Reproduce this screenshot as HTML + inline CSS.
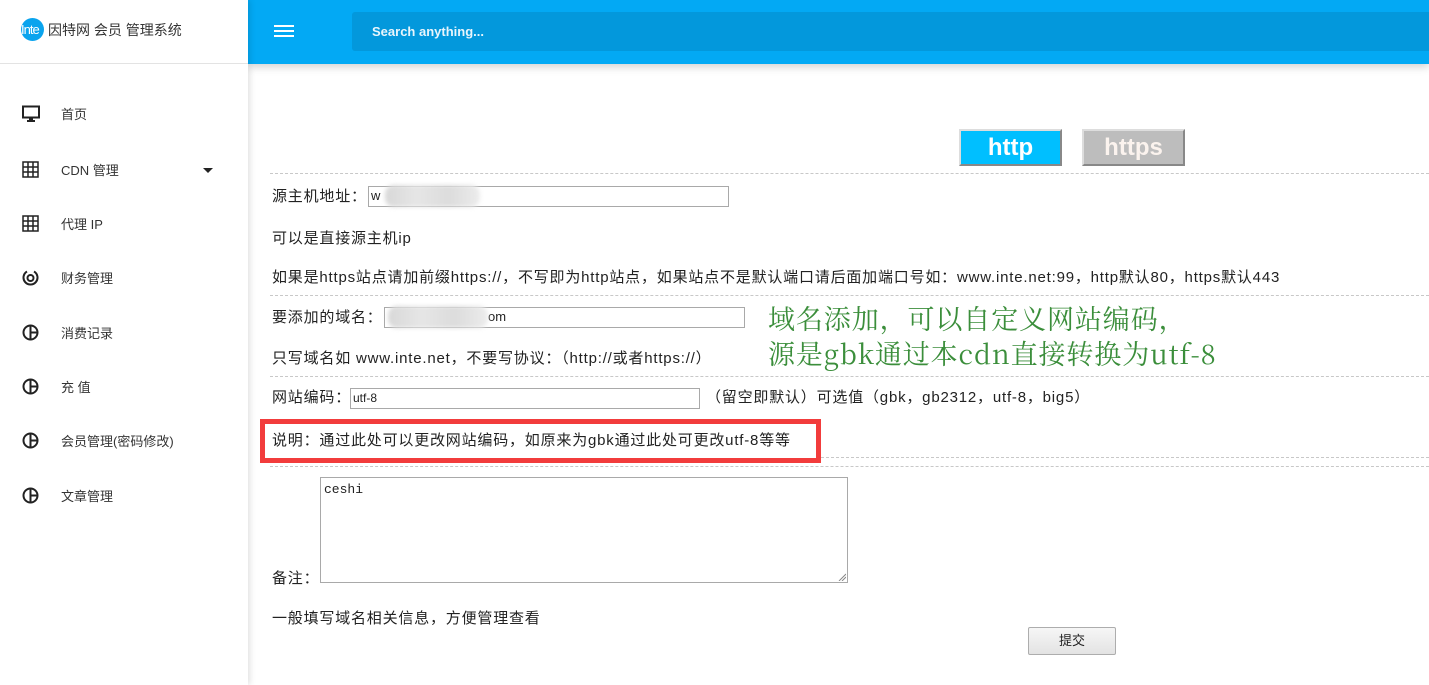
<!DOCTYPE html>
<html><head><meta charset="utf-8"><style>
*{margin:0;padding:0;box-sizing:border-box}
body{width:1429px;height:685px;overflow:hidden;background:#fff;position:relative;font-family:"Liberation Sans","Noto Sans CJK SC",sans-serif;color:#222}
.a{position:absolute;white-space:nowrap}
.side{position:absolute;left:0;top:0;width:248px;height:685px;background:#fff;box-shadow:2px 0 6px rgba(0,0,0,.12);z-index:3}
.logo{position:absolute;left:0;top:0;width:248px;height:64px;border-bottom:1px solid #e3e3e3}
.nav{position:absolute;left:61px;font-size:13px;color:#333}
.ic{position:absolute;left:22px}
.top{position:absolute;left:248px;top:0;width:1181px;height:64px;background:#03a9f4;box-shadow:0 3px 8px rgba(0,0,0,.18);z-index:2}
.dash{position:absolute;left:270px;right:0;border-top:1px dashed #c8c8c8}
.t{position:absolute;font-size:15px;color:#222;white-space:nowrap;letter-spacing:0.8px}
.inp{position:absolute;border:1px solid #a9a9a9;background:#fff;font-size:13px;padding-left:2px;line-height:18px}
.blur{position:absolute;background:linear-gradient(90deg,#d8d8d8,#e6e6e6,#dcdcdc,#ececec);border-radius:9px;filter:blur(2px)}
</style></head><body>
<div class="side">
 <div class="logo">
  <div class="a" style="left:21px;top:18px;width:23px;height:23px;border-radius:50%;background:#0aa4ee;color:#fff;font-size:13px;line-height:23px;letter-spacing:-1px;overflow:hidden">Inte</div>
  <div class="a" style="left:48px;top:20px;font-size:14px;color:#333">因特网 会员 管理系统</div>
 </div>
 <svg class="ic" style="top:105px" width="18" height="18" viewBox="0 0 18 18"><rect x="1" y="1.5" width="16" height="11" fill="none" stroke="#222" stroke-width="2"/><rect x="7" y="13" width="4" height="2" fill="#222"/><rect x="5" y="15" width="8" height="2" fill="#222"/></svg>
 <div class="nav" style="top:104px">首页</div>
 <svg class="ic" style="top:161px" width="17" height="17" viewBox="0 0 17 17" fill="none" stroke="#222" stroke-width="1.5"><rect x="1" y="1" width="15" height="15"/><path d="M6 1V16M11 1V16M1 6H16M1 11H16"/></svg>
 <div class="nav" style="top:160px">CDN 管理</div>
 <div class="a" style="left:203px;top:168px;width:0;height:0;border-left:5px solid transparent;border-right:5px solid transparent;border-top:5px solid #222"></div>
 <svg class="ic" style="top:215px" width="17" height="17" viewBox="0 0 17 17" fill="none" stroke="#222" stroke-width="1.5"><rect x="1" y="1" width="15" height="15"/><path d="M6 1V16M11 1V16M1 6H16M1 11H16"/></svg>
 <div class="nav" style="top:214px">代理 IP</div>
 <svg class="ic" style="top:269px" width="17" height="17" viewBox="0 0 17 17" fill="none" stroke="#222" stroke-width="2"><path d="M5 2.5A7 7 0 1 0 12 2.5"/><circle cx="8.5" cy="9" r="3"/></svg>
 <div class="nav" style="top:268px">财务管理</div>
 <svg class="ic" style="top:324px" width="17" height="17" viewBox="0 0 17 17" fill="none" stroke="#222" stroke-width="2"><circle cx="8.5" cy="8.5" r="7"/><path d="M8.5 1.5V15.5M8.5 8.5H15.5"/></svg>
 <div class="nav" style="top:323px">消费记录</div>
 <svg class="ic" style="top:378px" width="17" height="17" viewBox="0 0 17 17" fill="none" stroke="#222" stroke-width="2"><circle cx="8.5" cy="8.5" r="7"/><path d="M8.5 1.5V15.5M8.5 8.5H15.5"/></svg>
 <div class="nav" style="top:377px">充 值</div>
 <svg class="ic" style="top:432px" width="17" height="17" viewBox="0 0 17 17" fill="none" stroke="#222" stroke-width="2"><circle cx="8.5" cy="8.5" r="7"/><path d="M8.5 1.5V15.5M8.5 8.5H15.5"/></svg>
 <div class="nav" style="top:431px">会员管理(密码修改)</div>
 <svg class="ic" style="top:487px" width="17" height="17" viewBox="0 0 17 17" fill="none" stroke="#222" stroke-width="2"><circle cx="8.5" cy="8.5" r="7"/><path d="M8.5 1.5V15.5M8.5 8.5H15.5"/></svg>
 <div class="nav" style="top:486px">文章管理</div>
</div>
<div class="top">
 <div class="a" style="left:26px;top:25px;width:20px;height:2px;background:#fff;box-shadow:0 5px 0 #fff,0 10px 0 #fff"></div>
 <div class="a" style="left:104px;top:12px;right:0;height:39px;background:#0398dc;border-radius:3px 0 0 3px"></div>
 <div class="a" style="left:124px;top:24px;font-size:13px;font-weight:bold;color:#e8f5fc">Search anything...</div>
</div>

<div class="a" style="left:959px;top:129px;width:103px;height:37px;background:#00bfff;border:2px solid;border-color:#ddd #888 #888 #ddd;color:#fff;font-weight:bold;font-size:24px;text-align:center;line-height:34px">http</div>
<div class="a" style="left:1082px;top:129px;width:103px;height:37px;background:#bdbdbd;border:2px solid;border-color:#ddd #888 #888 #ddd;color:#fbf3ee;font-weight:bold;font-size:24px;text-align:center;line-height:34px">https</div>

<div class="dash" style="top:173px"></div>
<div class="t" style="left:272px;top:185px">源主机地址：</div>
<div class="inp" style="left:368px;top:186px;width:361px;height:21px">w</div>
<div class="blur" style="left:385px;top:185px;width:95px;height:22px"></div>
<div class="t" style="left:272px;top:227px">可以是直接源主机ip</div>
<div class="t" style="left:272px;top:266px">如果是https站点请加前缀https://，不写即为http站点，如果站点不是默认端口请后面加端口号如：www.inte.net:99，http默认80，https默认443</div>
<div class="dash" style="top:295px"></div>
<div class="t" style="left:272px;top:306px">要添加的域名：</div>
<div class="inp" style="left:384px;top:307px;width:361px;height:21px;padding-left:103px">om</div>
<div class="blur" style="left:388px;top:306px;width:100px;height:22px"></div>
<div class="a" style="left:768px;top:300px;font-family:'Noto Serif CJK SC','Liberation Serif',serif;font-size:27px;line-height:35px;color:#3b8e3b;letter-spacing:0.9px">域名添加，可以自定义网站编码，<br>源是gbk通过本cdn直接转换为utf-8</div>
<div class="t" style="left:272px;top:347px">只写域名如 www.inte.net，不要写协议：（http://或者https://）</div>
<div class="dash" style="top:376px"></div>
<div class="t" style="left:272px;top:386px">网站编码：</div>
<div class="inp" style="left:350px;top:388px;width:350px;height:21px;font-size:12px">utf-8</div>
<div class="t" style="left:706px;top:386px">（留空即默认）可选值（gbk，gb2312，utf-8，big5）</div>
<div class="a" style="left:260px;top:419px;width:561px;height:44px;border:5px solid #f23c3c;background:#fff"></div>
<div class="t" style="left:272px;top:429px">说明：通过此处可以更改网站编码，如原来为gbk通过此处可更改utf-8等等</div>
<div class="dash" style="top:457px;left:821px"></div>
<div class="dash" style="top:466px"></div>
<div class="a" style="left:320px;top:477px;width:528px;height:106px;border:1px solid #a9a9a9;font-family:'Liberation Mono',monospace;font-size:13px;padding:4px 3px">ceshi</div>
<svg class="a" style="left:838px;top:573px" width="8" height="8"><path d="M1 8L8 1M4 8L8 4" stroke="#888"/></svg>
<div class="t" style="left:272px;top:567px">备注：</div>
<div class="t" style="left:272px;top:607px">一般填写域名相关信息，方便管理查看</div>
<div class="a" style="left:1028px;top:627px;width:88px;height:28px;border:1px solid #adadad;border-radius:2px;background:linear-gradient(#f6f6f6,#e3e3e3);font-size:13px;text-align:center;line-height:26px">提交</div>
</body></html>
